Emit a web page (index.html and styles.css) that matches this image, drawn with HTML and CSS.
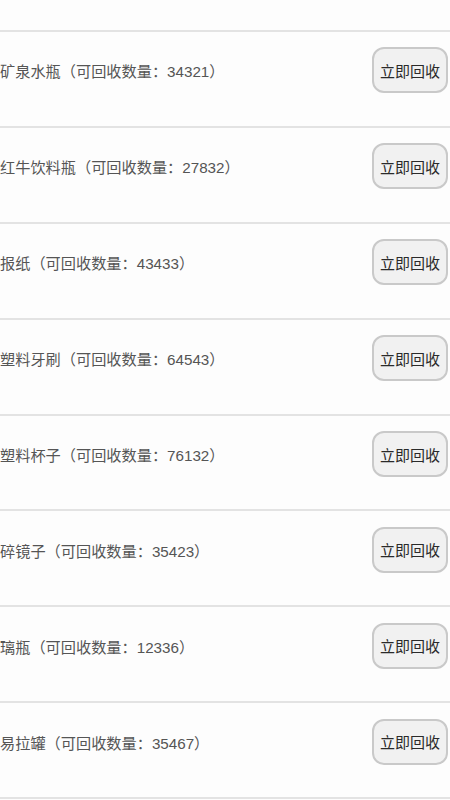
FILE: index.html
```html
<!DOCTYPE html>
<html lang="zh-CN">

<head>
  <meta charset="UTF-8">
  <meta name="viewport" content="width=device-width, initial-scale=1.0">
  <title>废品回收</title>
  <link rel="stylesheet" href="styles.css">
</head>

<body>
  <div class="top"></div>
  <ul class="list">
    <li class="item">
      <span class="name">矿泉水瓶（可回收数量：34321）</span>
      <button class="btn">立即回收</button>
    </li>
    <li class="item">
      <span class="name">红牛饮料瓶（可回收数量：27832）</span>
      <button class="btn">立即回收</button>
    </li>
    <li class="item">
      <span class="name">报纸（可回收数量：43433）</span>
      <button class="btn">立即回收</button>
    </li>
    <li class="item">
      <span class="name">塑料牙刷（可回收数量：64543）</span>
      <button class="btn">立即回收</button>
    </li>
    <li class="item">
      <span class="name">塑料杯子（可回收数量：76132）</span>
      <button class="btn">立即回收</button>
    </li>
    <li class="item">
      <span class="name">碎镜子（可回收数量：35423）</span>
      <button class="btn">立即回收</button>
    </li>
    <li class="item">
      <span class="name">璃瓶（可回收数量：12336）</span>
      <button class="btn">立即回收</button>
    </li>
    <li class="item">
      <span class="name">易拉罐（可回收数量：35467）</span>
      <button class="btn">立即回收</button>
    </li>
  </ul>
</body>

</html>
```

FILE: styles.css
```css
* {
  padding: 0px;
  margin: 0px;
  box-sizing: border-box;
}

body {
  background-color: #fdfdfd;
  font-family: "Liberation Sans", "Noto Sans CJK SC", sans-serif;
  overflow: hidden;
}

/* 上一条记录的底部 */
.top {
  height: 32px;
  border-bottom: 2px solid #e3e3e3;
}

.list {
  list-style: none;
}

.item {
  display: flex;
  justify-content: space-between;
  align-items: center;
  height: 95.9px;
  padding: 15px 2px 32px 0px;
  border-bottom: 2px solid #e3e3e3;
}

.name {
  font-size: 15.2px;
  color: #555;
  white-space: nowrap;
}

.btn {
  width: 76px;
  height: 46px;
  border: 2px solid #c9c9c9;
  border-radius: 12px;
  background-color: #f1f1f1;
  color: #2a2a2a;
  font-family: inherit;
  font-size: 15px;
}
```
